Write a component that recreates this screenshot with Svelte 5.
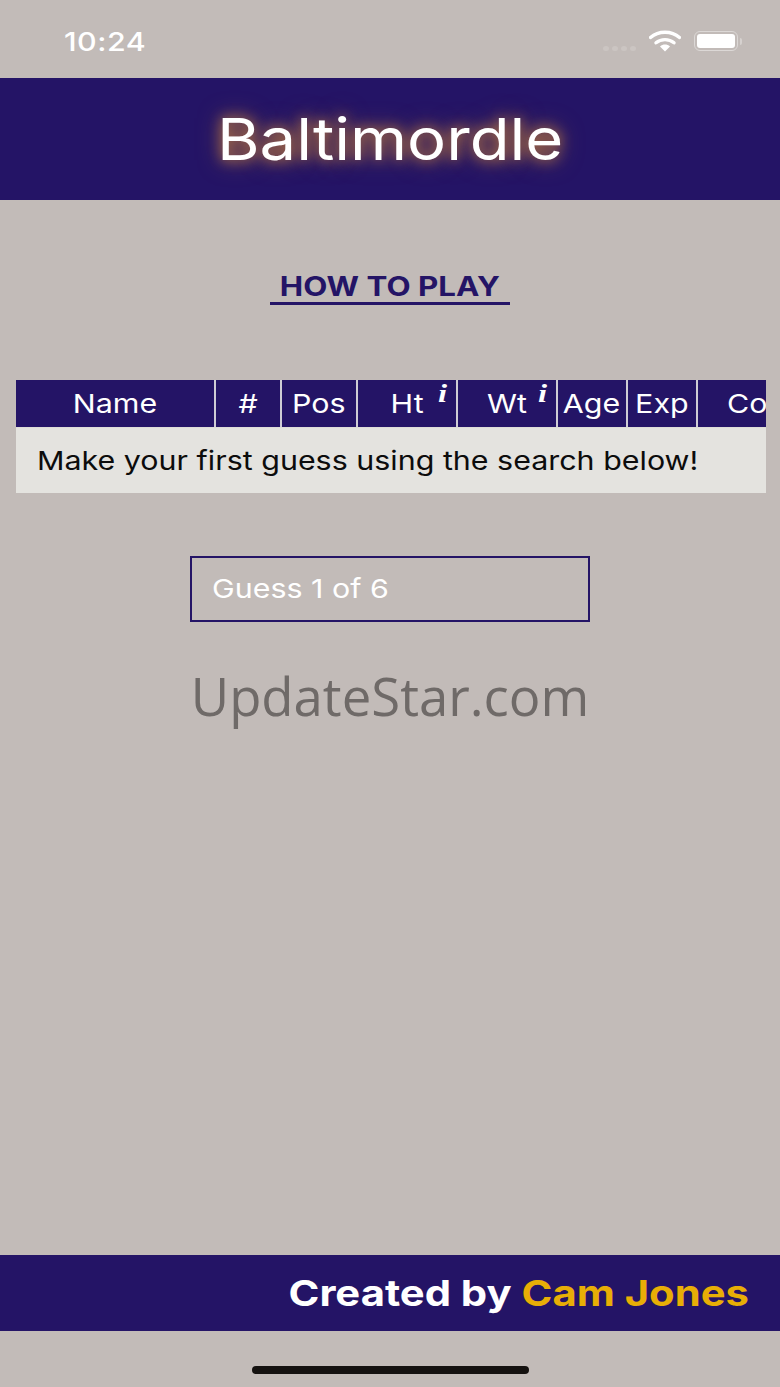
<script>
	const columns = [
		{ label: 'Name', width: 198 },
		{ label: '#', width: 64 },
		{ label: 'Pos', width: 74 },
		{ label: 'Ht', width: 98, info: true },
		{ label: 'Wt', width: 98, info: true },
		{ label: 'Age', width: 68 },
		{ label: 'Exp', width: 68 },
		{ label: 'Conf', width: 128 }
	];
</script>

<div class="page">
	<div class="status">
		<span class="time wide">10:24</span>
		<div class="status-icons">
			<div class="signal">
				<i></i><i></i><i></i><i></i>
			</div>
			<svg class="wifi" width="32" height="22" viewBox="0 0 32 22" aria-hidden="true">
				<path d="M1.5 7.5 C9.5 0.5 22.5 0.5 30.5 7.5" fill="none" stroke="#fff" stroke-width="3.4" stroke-linecap="round" />
				<path d="M7 12.8 C12 8.6 20 8.6 25 12.8" fill="none" stroke="#fff" stroke-width="3.4" stroke-linecap="round" />
				<path d="M11 16.4 C14 14 18 14 21 16.4 L16 21.5 Z" fill="#fff" />
			</svg>
			<div class="battery">
				<div class="battery-body"><div class="battery-fill"></div></div>
				<div class="battery-cap"></div>
			</div>
		</div>
	</div>

	<header class="banner">
		<h1>Baltimordle</h1>
	</header>

	<main>
		<div class="howto-wrap">
			<button class="howto"><span class="wide mid tight">HOW TO PLAY</span></button>
		</div>

		<div class="board">
			<div class="board-head">
				{#each columns as col}
					<div class="cell" style="flex-basis: {col.width}px">
						<span class="wide mid">{col.label}</span>
						{#if col.info}<span class="info">i</span>{/if}
					</div>
				{/each}
			</div>
			<div class="board-empty"><span class="wide">Make your first guess using the search below!</span></div>
		</div>

		<div class="guess"><span class="wide">Guess 1 of 6</span></div>

		<div class="watermark">UpdateStar.com</div>
	</main>

	<footer class="credit">
		<span class="wide right tight">Created by <em>Cam Jones</em></span>
	</footer>

	<div class="home-zone"><div class="home-bar"></div></div>
</div>

<style>
	:global(body) {
		background: #c2bbb8;
	}
	.page {
		width: 780px;
		height: 1387px;
		display: flex;
		flex-direction: column;
		overflow: hidden;
		background: #c2bbb8;
		font-family: Inter, "Liberation Sans", sans-serif;
	}
	/* the reference text is stretched sideways */
	.wide {
		display: inline-block;
		transform: scaleX(1.17);
		transform-origin: left center;
		white-space: nowrap;
	}
	.wide.mid {
		transform-origin: center;
	}
	.wide.right {
		transform-origin: right center;
	}
	.wide.tight {
		transform: scaleX(1.16);
	}
	.status {
		height: 78px;
		flex: none;
		box-sizing: border-box;
		display: flex;
		justify-content: space-between;
		align-items: flex-start;
		padding: 26px 38px 0 64px;
	}
	.time {
		color: #fff;
		font-size: 26px;
		line-height: 32px;
		font-weight: 500;
		letter-spacing: 0.4px;
	}
	.status-icons {
		display: flex;
		align-items: center;
		margin-top: 4px;
	}
	.signal {
		display: flex;
		gap: 3px;
		margin-top: 14px;
		margin-right: 13px;
	}
	.signal i {
		width: 6px;
		height: 5px;
		border-radius: 50%;
		background: #cbc5c2;
	}
	.battery {
		display: flex;
		align-items: center;
		gap: 2px;
		margin-left: 13px;
	}
	.battery-body {
		width: 44px;
		height: 20px;
		box-sizing: border-box;
		padding: 2px;
		border: 1.5px solid #dcd8d6;
		border-radius: 6px;
	}
	.battery-fill {
		height: 100%;
		background: #fff;
		border-radius: 3px;
	}
	.battery-cap {
		width: 2px;
		height: 7px;
		background: #d6d1cf;
		border-radius: 0 2px 2px 0;
	}
	.banner {
		height: 122px;
		flex: none;
		background: #241466;
		display: flex;
		align-items: center;
		justify-content: center;
	}
	h1 {
		margin: 0;
		color: #fff;
		font-size: 58px;
		font-weight: 400;
		line-height: 1;
		transform: scaleX(1.124);
		text-shadow: 0 0 12px #c9823e, 0 0 22px #8a5a40;
	}
	main {
		flex: 1;
		min-height: 0;
	}
	.howto-wrap {
		display: flex;
		justify-content: center;
		padding-top: 69px;
	}
	.howto {
		width: 240px;
		height: 36px;
		padding: 2px 0 0;
		background: none;
		border: none;
		border-bottom: 3px solid #241466;
		color: #241466;
		font-family: inherit;
		font-size: 27px;
		font-weight: 700;
		line-height: 30px;
	}
	.board {
		width: 750px;
		margin: 75px 0 0 16px;
		overflow: hidden;
		background: #e4e3df;
	}
	.board-head {
		display: flex;
		height: 48px;
		border-bottom: 1px solid #dedcd8;
		box-sizing: border-box;
		gap: 2px;
		background: #cfccd6;
	}
	.cell {
		flex: none;
		box-sizing: border-box;
		background: #241466;
		color: #fff;
		font-size: 26px;
		line-height: 47px;
		text-align: center;
		white-space: nowrap;
		position: relative;
	}
	.info {
		position: absolute;
		top: -10px;
		right: 10px;
		font-family: "Liberation Serif", serif;
		font-style: italic;
		font-weight: 700;
		font-size: 26px;
		transform: scaleX(1.25);
	}
	.board-empty {
		height: 65px;
		box-sizing: border-box;
		padding: 0 0 0 20.5px;
		color: #0c0c0c;
		font-size: 26px;
		line-height: 65px;
		white-space: nowrap;
	}
	.guess {
		width: 400px;
		height: 66px;
		box-sizing: border-box;
		margin: 63px auto 0;
		padding-left: 20px;
		border: 2px solid #241466;
		color: #fff;
		font-size: 26px;
		line-height: 62px;
	}
	.watermark {
		margin-top: 41px;
		text-align: center;
		color: #6f6a68;
		font-family: "Open Sans", sans-serif;
		font-size: 52.7px;
		line-height: 66px;
	}
	.credit {
		height: 76px;
		flex: none;
		background: #241466;
		display: flex;
		align-items: center;
		justify-content: flex-end;
		padding-right: 31px;
		color: #fff;
		font-size: 36px;
		font-weight: 700;
	}
	.credit em {
		font-style: normal;
		color: #e8ae06;
	}
	.home-zone {
		height: 56px;
		flex: none;
		display: flex;
		justify-content: center;
		padding-top: 35px;
		box-sizing: border-box;
	}
	.home-bar {
		width: 277px;
		height: 8px;
		border-radius: 4px;
		background: #151210;
	}
</style>
